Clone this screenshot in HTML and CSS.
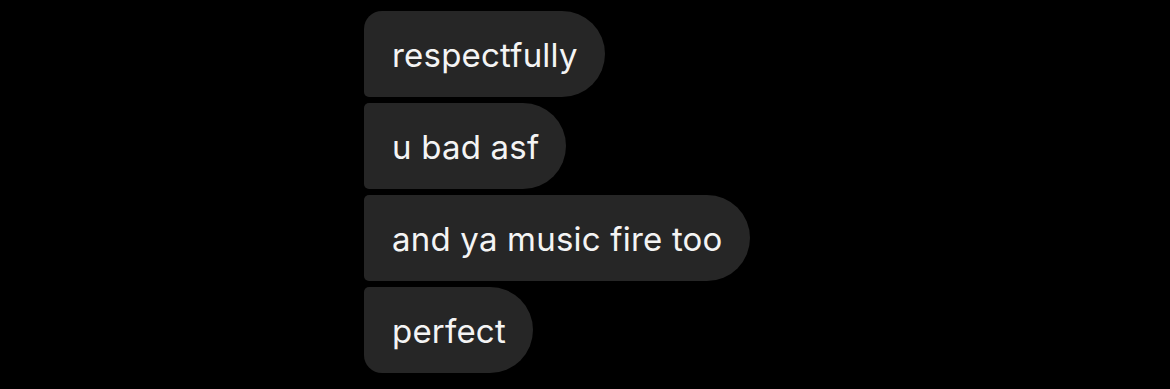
FILE: index.html
```html
<!DOCTYPE html>
<html lang="en">
<head>
  <meta charset="UTF-8">
  <meta name="viewport" content="width=device-width, initial-scale=1.0">
  <title>Messages</title>
  <link rel="stylesheet" href="styles.css">
</head>
<body>
  <main class="thread">
    <div class="bubble first">respectfully</div>
    <div class="bubble">u bad asf</div>
    <div class="bubble">and ya music fire too</div>
    <div class="bubble last">perfect</div>
  </main>
</body>
</html>
```

FILE: styles.css
```css
/* Fond noir, conversation */
body {
  margin: 0;
  background-color: #000;
  font-family: Inter, "Noto Sans", sans-serif;
}

.thread {
  display: flex;
  flex-direction: column;
  align-items: flex-start;
  gap: 6px;
  padding: 11px 0 0 364px;
}

.bubble {
  display: flex;
  align-items: center;
  height: 86px;
  box-sizing: border-box;
  padding: 2px 27px 0 28px;
  background-color: #262626;
  color: #f4f4f4;
  font-size: 33px;
  letter-spacing: 0.2px;
  border-radius: 5px 43px 43px 5px;
}

.bubble.first {
  border-top-left-radius: 18px;
}

.bubble.last {
  border-bottom-left-radius: 18px;
}
```
